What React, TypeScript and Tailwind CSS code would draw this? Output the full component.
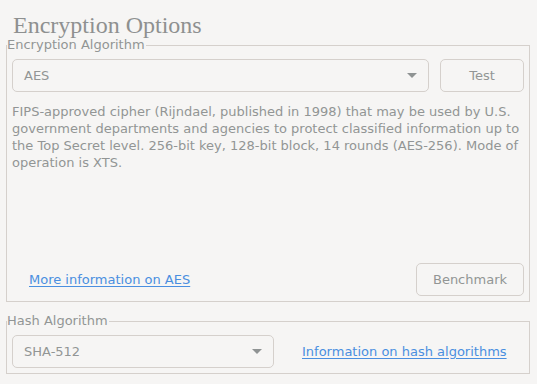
import React from "react";

const Arrow = () => (
  <svg width="10" height="5" viewBox="0 0 10 5" className="shrink-0">
    <path d="M0 0 L10 0 L5 5 Z" fill="#8f9393" />
  </svg>
);

export default function App() {
  return (
    <div
      className="w-[537px] h-[384px] overflow-hidden bg-[#f6f5f4] flex flex-col pl-[6px] pr-[7px] text-[13px] text-[#929595]"
      style={{ fontFamily: '"DejaVu Sans", sans-serif' }}
    >
      <div className="h-[37px] pl-[7px] pt-[11px]">
        <div
          className="text-[24px] leading-[28px] text-[#8e9090]"
          style={{ fontFamily: '"Liberation Serif", serif' }}
        >
          Encryption Options
        </div>
      </div>

      <fieldset className="border border-[#d5d0cc] m-0 p-0 min-w-0">
        <legend className="p-0 m-0 leading-[16px] pr-[1px]">Encryption Algorithm</legend>
        <div className="h-[248px] flex flex-col px-[5px] pt-[6px] pb-[5px]">
          <div className="flex gap-[11px]">
            <div className="flex-1 h-[33px] border border-[#d5d0cc] rounded-[5px] flex items-center pl-[11px] pr-[11px]">
              <span className="flex-1">AES</span>
              <Arrow />
            </div>
            <div className="w-[84px] h-[33px] border border-[#d5d0cc] rounded-[5px] flex items-center justify-center">
              Test
            </div>
          </div>
          <p className="mt-[11px] leading-[17px]">
            FIPS-approved cipher (Rijndael, published in 1998) that may be used by U.S. government
            departments and agencies to protect classified information up to the Top Secret level.
            256-bit key, 128-bit block, 14 rounds (AES-256). Mode of operation is XTS.
          </p>
          <div className="flex-1" />
          <div className="flex items-center justify-between">
            <span className="ml-[17px] text-[#4a8fe0] underline underline-offset-[2px]">
              More information on AES
            </span>
            <div className="w-[108px] h-[33px] border border-[#d5d0cc] rounded-[5px] flex items-center justify-center">
              Benchmark
            </div>
          </div>
        </div>
      </fieldset>

      <fieldset className="mt-[11px] border border-[#d5d0cc] m-0 p-0 min-w-0">
        <legend className="p-0 m-0 leading-[16px] pr-[1px]">Hash Algorithm</legend>
        <div className="flex items-center px-[5px] pt-[6px] pb-[5px]">
          <div className="w-[262px] h-[33px] border border-[#d5d0cc] rounded-[5px] flex items-center pl-[11px] pr-[11px]">
            <span className="flex-1">SHA-512</span>
            <Arrow />
          </div>
          <span className="ml-[28px] text-[#4a8fe0] underline underline-offset-[2px]">
            Information on hash algorithms
          </span>
        </div>
      </fieldset>
    </div>
  );
}
